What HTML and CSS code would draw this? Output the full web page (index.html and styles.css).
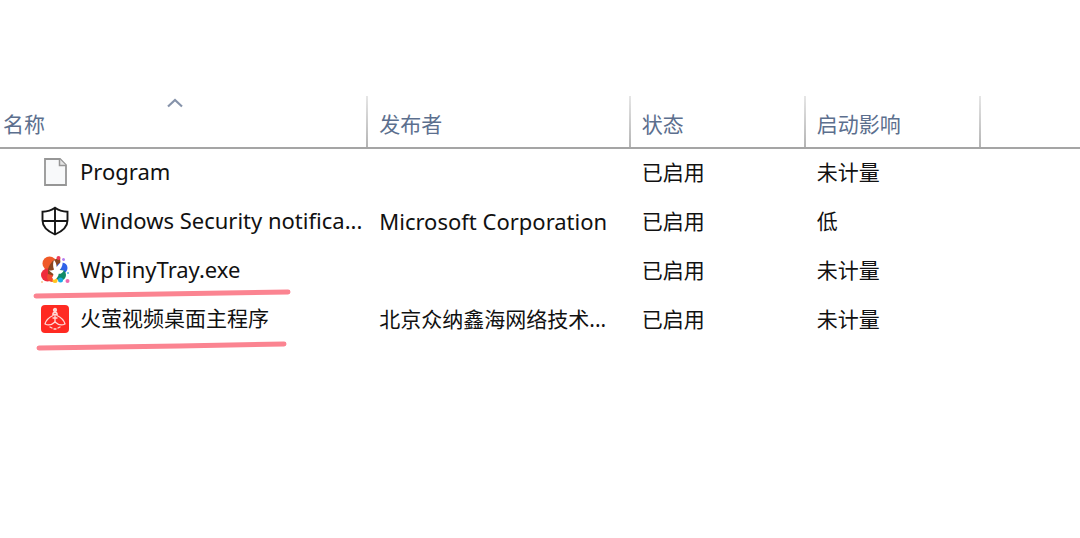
FILE: index.html
```html
<!DOCTYPE html>
<html lang="zh-CN">
<head>
<meta charset="utf-8">
<meta name="viewport" content="width=device-width, initial-scale=1">
<title>启动</title>
<link rel="stylesheet" href="styles.css">
</head>
<body>
<main class="page">
<table class="startup">
  <colgroup>
    <col class="col-name"><col class="col-publisher"><col class="col-status"><col class="col-impact"><col>
  </colgroup>
  <thead>
    <tr>
      <th scope="col" aria-sort="ascending"><button class="sort" type="button">名称<svg class="caret" viewBox="0 0 18 10" aria-hidden="true"><path d="M2 8.500 9 2l7 6.500" fill="none" stroke="#8693aa" stroke-width="2.200"/></svg></button></th>
      <th scope="col"><button class="sort" type="button">发布者</button></th>
      <th scope="col"><button class="sort" type="button">状态</button></th>
      <th scope="col"><button class="sort" type="button">启动影响</button></th>
      <td></td>
    </tr>
  </thead>
  <tbody>
    <tr>
      <td><div class="app">
        <svg class="icon" viewBox="0 0 30 30" aria-hidden="true"><path d="M5 2h15l6 6v20H5z" fill="#f8f9fa" stroke="#969696" stroke-width="1.800"/><path d="M19.500 2v6.500H26" fill="#e4e4e4" stroke="#969696" stroke-width="1.500"/></svg>
        <span class="latin">Program</span></div></td>
      <td></td><td>已启用</td><td>未计量</td><td></td>
    </tr>
    <tr>
      <td><div class="app">
        <svg class="icon" viewBox="0 0 30 30" aria-hidden="true"><path d="M15 1.800c3.500 2.700 7.500 3.900 12.500 4v8.700c0 6.500-4.500 10.500-12.500 14-8-3.500-12.500-7.500-12.500-14V5.800c5-.1 9-1.300 12.500-4zM15 2v26M2.500 15h25" fill="none" stroke="#161616" stroke-width="1.900"/></svg>
        <span class="latin">Windows Security notifica...</span></div></td>
      <td class="latin">Microsoft Corporation</td><td>已启用</td><td>低</td><td></td>
    </tr>
    <tr>
      <td><div class="app">
        <svg class="icon" viewBox="0 0 30 30" aria-hidden="true">
          <circle cx="9.500" cy="8.500" r="7" fill="#f05a28"/>
          <circle cx="7.500" cy="20" r="6.500" fill="#ef2b3c"/>
          <circle cx="12" cy="22" r="5" fill="#f04a30"/>
          <path d="M8 14c2-6 6-11 12-11l1 10-6 8-7-2z" fill="#8a4520"/>
          <circle cx="22" cy="13" r="5.500" fill="#2f62e8"/>
          <circle cx="20.500" cy="20" r="5.500" fill="#118a68"/>
          <circle cx="15" cy="25.500" r="2.500" fill="#ffc51f"/>
          <circle cx="20.500" cy="25" r="2.500" fill="#19a9e5"/>
          <circle cx="18.500" cy="3" r="2" fill="#ed3c58"/>
          <circle cx="23.500" cy="4.500" r="1.500" fill="#b27bf0"/>
          <circle cx="27.500" cy="26" r="2" fill="#ee68ad"/>
          <circle cx="28" cy="18" r="1" fill="#50b4ea"/>
          <circle cx="2" cy="27" r="1" fill="#f4ca91"/>
          <path d="M14 5c1.800 2 2.600 4.500 2.700 7L22.500 5c.7 4-.5 7.500-2.800 10l4 .5c-1 2.500-3 3.500-5 3.300-.2 3-2 5-5 6.200L12 22.500c1-1 1.500-2.200 1.300-3.500L9 15.500c2 .2 3.800-.2 5-1C12.800 11.500 12.800 8 14 5z" fill="#fff"/>
        </svg>
        <span class="latin">WpTinyTray.exe</span>
        <svg class="mark" viewBox="0 0 258 10" aria-hidden="true"><path d="M3 7C86 6 170 5 255 3" fill="none" stroke="#fb8491" stroke-width="5" stroke-linecap="round"/></svg></div></td>
      <td></td><td>已启用</td><td>未计量</td><td></td>
    </tr>
    <tr>
      <td><div class="app">
        <svg class="icon" viewBox="0 0 30 30" aria-hidden="true">
          <rect x="1" y="1" width="28" height="28" rx="4" fill="#ff2a22"/>
          <g fill="none" stroke="#ffd9d5" stroke-width="1.300" stroke-linecap="round" stroke-linejoin="round">
            <circle cx="15" cy="6" r="1.500" fill="#ffd9d5"/>
            <path d="M12.800 10.500c0-3 4.400-3 4.400 0zM13 11.500C8.500 13.500 6 16.500 5 20c3 1.500 7 .8 10-2 3 2.800 7 3.500 10 2-1-3.500-3.500-6.500-8-8.500"/>
            <path d="M15 11.500V18M13 14h4M10 23l2 1M14 25h2M20 23l-2 1"/>
          </g>
        </svg>
        <span>火萤视频桌面主程序</span>
        <svg class="mark mark-last" viewBox="0 0 258 10" aria-hidden="true"><path d="M6 7C86 6 170 5 251 3" fill="none" stroke="#fb8491" stroke-width="5" stroke-linecap="round"/></svg></div></td>
      <td>北京众纳鑫海网络技术...</td><td>已启用</td><td>未计量</td><td></td>
    </tr>
  </tbody>
</table>
</main>
</body>
</html>
```
FILE: styles.css
```css
body {
  margin: 0;
  background: #fff;
  color: #111;
  font: 21px/28px "Noto Sans", "Noto Sans CJK SC", sans-serif;
}

.page {
  box-sizing: border-box;
  min-height: 100vh;
  padding: 96px 0 48px;
}

.startup {
  width: 100%;
  table-layout: fixed;
  border-collapse: separate;
  border-spacing: 0;
}

.col-name { width: 34.1%; }
.col-publisher { width: 24.3%; }
.col-status,
.col-impact { width: 16.2%; }

.startup th,
.startup td {
  box-sizing: border-box;
  height: 49px;
  padding: 0 0 4px 11px;
  text-align: left;
  font-weight: 400;
  white-space: nowrap;
}

.startup thead th,
.startup thead td {
  height: 53px;
  border-bottom: 2px solid #a5a5a5;
}

.startup thead th {
  background: linear-gradient(#e6e6e6, #b4b4b4) right / 2px 100% no-repeat;
}

.startup th:first-child,
.startup td:first-child {
  padding-left: 3px;
}

.startup .latin {
  font-size: 22px;
}

.sort {
  position: relative;
  display: block;
  width: 100%;
  padding: 8px 0 0;
  border: 0;
  background: none;
  color: #5c6f8e;
  font: inherit;
  text-align: left;
}

.caret {
  position: absolute;
  top: -4px;
  left: calc(50% - 20px);
  width: 18px;
  height: 10px;
}

.app {
  position: relative;
  display: flex;
  align-items: center;
  gap: 10px;
  padding-left: 37px;
}

.app span {
  padding-bottom: 2px;
}

.icon {
  flex: none;
  width: 30px;
  height: 30px;
}

.mark {
  position: absolute;
  top: 34px;
  left: 30px;
  width: 258px;
  height: 10px;
}

.mark-last {
  top: 37px;
}
```
